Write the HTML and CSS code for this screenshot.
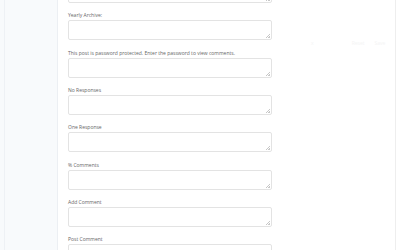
FILE: index.html
```html
<!DOCTYPE html>
<html lang="en">

<head>
    <meta charset="UTF-8">
    <meta name="viewport" content="width=device-width, initial-scale=1.0">
    <title>Comment strings</title>
    <link rel="stylesheet" href="styles.css">
</head>

<body>
    <div class="page">
        <div class="side-bar"></div>
        <div class="main-area">
            <form class="string-list" action="">
                <div class="field first-field">
                    <div class="box"><textarea></textarea></div>
                </div>
                <div class="field">
                    <label for="">Yearly Archive:</label>
                    <div class="box"><textarea></textarea></div>
                </div>
                <div class="field">
                    <label for="">This post is password protected. Enter the password to view comments.</label>
                    <div class="box"><textarea></textarea></div>
                </div>
                <div class="field">
                    <label for="">No Responses</label>
                    <div class="box"><textarea></textarea></div>
                </div>
                <div class="field">
                    <label for="">One Response</label>
                    <div class="box"><textarea></textarea></div>
                </div>
                <div class="field">
                    <label for="">% Comments</label>
                    <div class="box"><textarea></textarea></div>
                </div>
                <div class="field">
                    <label for="">Add Comment</label>
                    <div class="box"><textarea></textarea></div>
                </div>
                <div class="field">
                    <label for="">Post Comment</label>
                    <div class="box"><textarea></textarea></div>
                </div>
            </form>
            <div class="faint-bar">
                <span class="close">x</span>
                <span>Reset</span>
                <span>Save</span>
            </div>
        </div>
        <div class="edge"></div>
    </div>
</body>

</html>
```

FILE: styles.css
```css
* {
    margin: 0;
    padding: 0;
    box-sizing: border-box;
}

body {
    background-color: white;
    font-family: "Open Sans", "Liberation Sans", sans-serif;
    color: #444;
    overflow: hidden;
}

.page {
    display: flex;
    height: 250px;
}

.side-bar {
    width: 54px;
    flex-shrink: 0;
    margin-left: 4px;
    background-color: #f8fafc;
    border-left: 1px solid #eef1f5;
    border-right: 1px solid #eceff3;
    box-shadow: -4px 0 0 #f8fafc;
}

.main-area {
    flex: 1;
    display: flex;
    padding-left: 10px;
}

.string-list {
    width: 204px;
    margin-top: -17px;
    display: flex;
    flex-direction: column;
}

.field {
    display: flex;
    flex-direction: column;
    margin-bottom: 9.33px;
}

.field>label {
    font-size: 5px;
    line-height: 6px;
    margin-bottom: 2px;
    color: #666;
    white-space: nowrap;
}

.box {
    position: relative;
    height: 20px;
}

.box>textarea {
    display: block;
    width: 100%;
    height: 100%;
    border: 1px solid #e3e3e3;
    border-radius: 2px;
    background-color: white;
    font-size: 6px;
    outline: none;
    resize: none;
}

/* little resize grip */
.box::after {
    content: "";
    position: absolute;
    right: 2px;
    bottom: 2px;
    width: 4px;
    height: 4px;
    background: linear-gradient(135deg, transparent 45%, #c8c8c8 45%, #c8c8c8 58%, transparent 58%, transparent 75%, #c8c8c8 75%);
}

.faint-bar {
    display: flex;
    gap: 10px;
    margin-left: 39px;
    margin-top: 40px;
    font-size: 5px;
    color: #f4f4f4;
    height: 8px;
}

.faint-bar>.close {
    margin-right: 28px;
}

.edge {
    width: 5px;
    flex-shrink: 0;
    border-left: 1px solid #eeeeee;
}
```
